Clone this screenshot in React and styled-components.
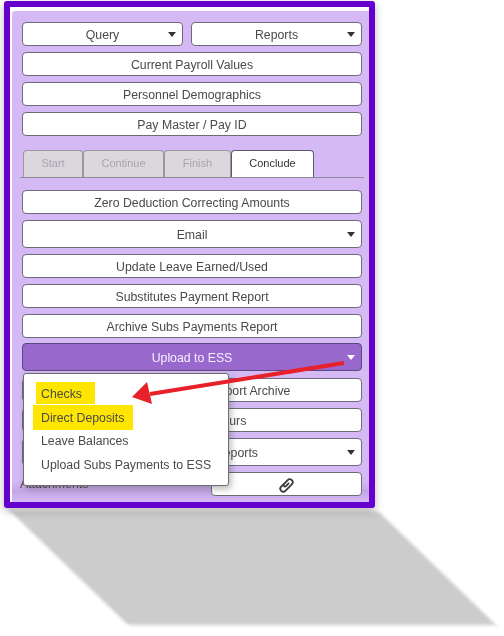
import styled, { createGlobalStyle } from 'styled-components';

const GlobalStyle = createGlobalStyle`
html, body {
  margin: 0;
  padding: 0;
  background: #fff;
  overflow: hidden;
}
body {
  font-family: "Liberation Sans", Arial, sans-serif;
}
`

export default function App() {
    return (
        <Page>
            <GlobalStyle />
            <Frame>
                <Panel>
                    <Row>
                        <Button $caret $grow={161}>Query</Button>
                        <Button $caret $grow={171}>Reports</Button>
                    </Row>
                    <Button>Current Payroll Values</Button>
                    <Button>Personnel Demographics</Button>
                    <Button>Pay Master / Pay ID</Button>

                    <Tabs>
                        <Tab $w={60}>Start</Tab>
                        <Tab $w={81}>Continue</Tab>
                        <Tab $w={67}>Finish</Tab>
                        <Tab $w={83} $active>Conclude</Tab>
                    </Tabs>

                    <Button>Zero Deduction Correcting Amounts</Button>
                    <Button $caret $tall>Email</Button>
                    <Button>Update Leave Earned/Used</Button>
                    <Button>Substitutes Payment Report</Button>
                    <Button>Archive Subs Payments Report</Button>

                    <MenuAnchor>
                        <Button $caret $tall $open>Upload to ESS</Button>
                        <Menu>
                            <MenuItem $hl={{ left: 12, width: 59, top: -1, height: 22 }}>Checks</MenuItem>
                            <MenuItem $hl={{ left: 9, width: 100, top: -2, height: 25 }}>Direct Deposits</MenuItem>
                            <MenuItem>Leave Balances</MenuItem>
                            <MenuItem>Upload Subs Payments to ESS</MenuItem>
                        </Menu>
                    </MenuAnchor>

                    <Button>Substitutes Payment Report Archive</Button>
                    <Button>Sub Absence Hours</Button>
                    <Button $caret $tall>Fiscal Year End Reports</Button>
                    <AttachRow>
                        <AttachLabel>Attachments</AttachLabel>
                        <Button $grow={151}>
                            <Clip viewBox="0 0 16 16" aria-hidden="true">
                                <path d="M7.5 5.5 L3 10 a2.7 2.7 0 0 0 3.9 3.9 L13 7.8 a2.7 2.7 0 0 0 -3.9 -3.9 L5.6 7.6 a1.3 1.3 0 0 0 1.9 1.9 L10 7" />
                            </Clip>
                        </Button>
                    </AttachRow>
                </Panel>
                <Arrow viewBox="0 0 230 60" aria-hidden="true">
                    <path d="M219 7 L25 38" stroke="#e8202a" strokeWidth="4" fill="none" />
                    <path d="M7 41 L22 26 L27 48 Z" fill="#e8202a" />
                </Arrow>
            </Frame>
            <CastShadow />
        </Page>
    )
}

const Page = styled.div`
width: 504px;
height: 636px;
padding: 1px 0 0 4px;
box-sizing: border-box;
position: relative;
overflow: hidden;
`
const Frame = styled.div`
position: relative;
z-index: 1;
box-sizing: border-box;
width: 371px;
height: 507px;
padding: 4px 0 0 2px;
background: #fff;
border: solid 6px #6600cc;
border-radius: 3px;
box-shadow: 0 3px 8px rgba(60, 60, 60, 0.35);
`
const Panel = styled.div`
box-sizing: border-box;
height: 491px;
padding: 11px 7px 0 10px;
display: flex;
flex-direction: column;
gap: 6px;
background: linear-gradient(#d4b9f4 0, #d4b9f4 470px, #c4a6e6 480px, #d4b9f4 491px);
border-radius: 3px 0 0 0;
filter: blur(0.35px);
`
const Row = styled.div`
display: flex;
gap: 8px;
`
const Button = styled.div`
position: relative;
box-sizing: border-box;
flex: ${p => p.$grow ? `0 0 ${p.$grow}px` : '0 0 auto'};
height: ${p => p.$tall ? '28px' : '24px'};
padding-top: 1px;
display: flex;
align-items: center;
justify-content: center;
font-size: 12.3px;
color: ${p => p.$open ? '#f6f0ff' : '#4a4a4a'};
background: ${p => p.$open ? '#9868cc' : '#fff'};
border: solid 1px ${p => p.$open ? '#5d4a80' : '#6e6a76'};
border-radius: 4px;
&::after {
  content: ${p => p.$caret ? '""' : 'none'};
  position: absolute;
  right: 6px;
  top: 50%;
  margin-top: -2px;
  border-style: solid;
  border-width: 5px 4px 0 4px;
  border-color: ${p => p.$open ? '#fff' : '#333'} transparent transparent transparent;
}
`
const Tabs = styled.div`
display: flex;
height: 27px;
margin: 8px -2px 6px -2px;
padding-left: 3px;
border-bottom: solid 1px #8f8a99;
`
const Tab = styled.div`
box-sizing: border-box;
width: ${p => p.$w}px;
height: 27px;
padding-bottom: 2px;
display: flex;
align-items: center;
justify-content: center;
font-size: 11px;
color: ${p => p.$active ? '#333' : '#a8a4ac'};
background: ${p => p.$active ? '#fff' : '#dcd6dd'};
border: solid 1px ${p => p.$active ? '#5e5a66' : '#9a96a0'};
border-bottom: none;
border-radius: 4px 4px 0 0;
`
const MenuAnchor = styled.div`
position: relative;
display: flex;
flex-direction: column;
margin: -1px 0 1px;
`
const Menu = styled.div`
position: absolute;
z-index: 2;
top: 30px;
left: 1px;
box-sizing: border-box;
width: 206px;
height: 113px;
padding: 9px 0 0;
display: flex;
flex-direction: column;
background: #fff;
border: solid 1px #6e6a76;
border-radius: 3px;
box-shadow: 2px 3px 6px rgba(60, 60, 60, 0.35);
`
const MenuItem = styled.div`
position: relative;
isolation: isolate;
height: 23.6px;
line-height: 23.6px;
padding-left: 17px;
font-size: 12.3px;
color: #4a4a4a;
white-space: nowrap;
&::before {
  content: ${p => p.$hl ? '""' : 'none'};
  position: absolute;
  z-index: -1;
  left: ${p => p.$hl?.left}px;
  width: ${p => p.$hl?.width}px;
  top: ${p => p.$hl?.top}px;
  height: ${p => p.$hl?.height}px;
  background: #ffe600;
}
`
const AttachRow = styled.div`
display: flex;
justify-content: space-between;
align-items: flex-end;
`
const AttachLabel = styled.div`
font-size: 12.3px;
color: #4a4a4a;
margin-left: -2px;
line-height: 15px;
padding-bottom: 4px;
`
const Clip = styled.svg`
width: 17px;
height: 17px;
fill: none;
stroke: #3a3a3a;
stroke-width: 1.7;
stroke-linecap: round;
`
const Arrow = styled.svg`
position: absolute;
z-index: 3;
left: 115px;
top: 349px;
width: 230px;
height: 60px;
`
const CastShadow = styled.div`
width: 368px;
height: 114px;
margin: 3px 0 0 65px;
background: #cccccc;
transform: skewX(46deg);
filter: blur(2px);
`
